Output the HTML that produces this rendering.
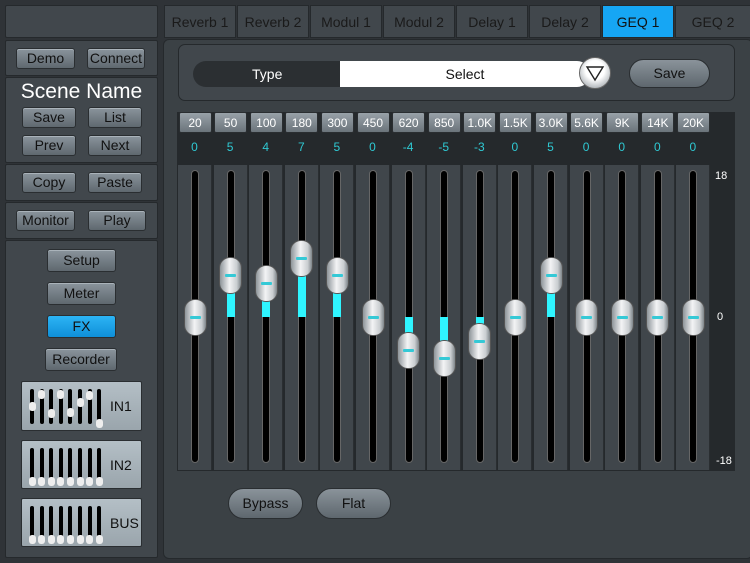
<!DOCTYPE html>
<html><head><meta charset="utf-8"><style>
*{box-sizing:border-box;margin:0;padding:0}
body{width:750px;height:563px;background:#2f3337;font-family:"Liberation Sans",sans-serif;position:relative;overflow:hidden}
.a{position:absolute}
.sec{position:absolute;left:5px;width:153px;background:#41474c;border:1px solid #25292c;border-radius:2px}
.btn{position:absolute;background:linear-gradient(#8a949c,#5f686f);border:1px solid #2a2e31;border-radius:3px;color:#111;font-size:14px;text-align:center;box-shadow:inset 0 1px 0 #aab3ba}
.tab{position:absolute;top:5px;height:33px;width:72px;background:#41474c;border:1px solid #25292c;color:#1a1a1a;font-size:14px;text-align:center;line-height:32px}
.lbl{position:absolute;top:112px;height:21px;width:33px;background:linear-gradient(#98a1a8,#6b747b);border:1px solid #2a2e31;border-radius:2px;font-size:12px;color:#fff;text-align:center;line-height:20px}
.val{position:absolute;top:140px;width:33px;text-align:center;color:#2fc9d3;font-size:12px}
.col{position:absolute;top:165px;height:305px;width:34px;background:#40464b;border-right:1px solid #2a2e31}
.trk{position:absolute;width:8px;background:#000;border:1px solid #666;border-radius:4px;top:170px;height:293px}
.cy{position:absolute;width:8px;background:#2ff5ff}
.th{position:absolute;width:23px;height:37px;border-radius:11px;background:linear-gradient(90deg,#8e959a,#f3f4f5 45%,#c9cdd0 80%,#7e858a);border:1px solid #555}
.th:after{content:"";position:absolute;left:5px;right:5px;top:16px;height:3px;background:#35c9d6;border-radius:1px}
.mini{position:absolute;left:21px;width:121px;background:linear-gradient(#b4bfc6,#9aa5ac);border:1px solid #2a2e31;border-radius:2px}
.mt{position:absolute;width:4px;background:#000;border-radius:2px}
.mk{position:absolute;width:7px;height:9px;background:#eee;border-radius:3px}
.ml{position:absolute;left:88px;font-size:14px;color:#111}
</style></head><body>
<div class="sec" style="top:5px;height:33px"></div>
<div class="sec" style="top:40px;height:36px"></div>
<div class="sec" style="top:77px;height:86px"></div>
<div class="sec" style="top:164px;height:37px"></div>
<div class="sec" style="top:202px;height:37px"></div>
<div class="sec" style="top:240px;height:318px"></div>
<div class="btn" style="left:16px;top:48px;width:59px;height:21px;line-height:19px">Demo</div>
<div class="btn" style="left:87px;top:48px;width:58px;height:21px;line-height:19px">Connect</div>
<div class="a" style="left:5px;top:80px;width:153px;text-align:center;color:#fff;font-size:21px">Scene Name</div>
<div class="btn" style="left:22px;top:107px;width:54px;height:21px;line-height:19px">Save</div>
<div class="btn" style="left:88px;top:107px;width:54px;height:21px;line-height:19px">List</div>
<div class="btn" style="left:22px;top:135px;width:54px;height:21px;line-height:19px">Prev</div>
<div class="btn" style="left:88px;top:135px;width:54px;height:21px;line-height:19px">Next</div>
<div class="btn" style="left:22px;top:172px;width:54px;height:21px;line-height:19px">Copy</div>
<div class="btn" style="left:88px;top:172px;width:54px;height:21px;line-height:19px">Paste</div>
<div class="btn" style="left:16px;top:210px;width:59px;height:21px;line-height:19px">Monitor</div>
<div class="btn" style="left:88px;top:210px;width:58px;height:21px;line-height:19px">Play</div>
<div class="btn" style="left:47px;top:249px;width:69px;height:23px;line-height:21px">Setup</div>
<div class="btn" style="left:47px;top:282px;width:69px;height:23px;line-height:21px">Meter</div>
<div class="btn" style="left:47px;top:315px;width:69px;height:23px;line-height:21px;background:linear-gradient(#2cb4f5,#0f8fd8);box-shadow:none">FX</div>
<div class="btn" style="left:45px;top:348px;width:72px;height:23px;line-height:21px">Recorder</div>
<div class="mini" style="top:381px;height:50px" id="m1"><div class="ml" style="top:16px">IN1</div></div>
<div class="mini" style="top:440px;height:49px" id="m2"><div class="ml" style="top:16px">IN2</div></div>
<div class="mini" style="top:498px;height:49px" id="m3"><div class="ml" style="top:16px">BUS</div></div>

<div class="tab" style="left:164px">Reverb 1</div>
<div class="tab" style="left:237px">Reverb 2</div>
<div class="tab" style="left:310px">Modul 1</div>
<div class="tab" style="left:383px">Modul 2</div>
<div class="tab" style="left:456px">Delay 1</div>
<div class="tab" style="left:529px">Delay 2</div>
<div class="tab" style="left:602px;background:#16a6f4;color:#111">GEQ 1</div>
<div class="tab" style="left:675px;width:76px">GEQ 2</div>

<div class="a" style="left:163px;top:39px;width:590px;height:520px;background:#3b4145;border:1px solid #25292c;border-radius:6px"></div>
<div class="a" style="left:178px;top:44px;width:557px;height:57px;background:#41474c;border:1px solid #25292c;border-radius:7px"></div>
<div class="a" style="left:193px;top:61px;width:160px;height:26px;background:#2b2f32;border-radius:13px;color:#fff;font-size:14px;line-height:26px;padding-left:59px">Type</div>
<div class="a" style="left:340px;top:61px;width:250px;height:26px;background:#fff;color:#111;font-size:14px;line-height:26px;text-align:center;border-radius:0 13px 13px 0">Select</div>
<div class="a" style="left:579px;top:57px;width:32px;height:32px;border-radius:50%;background:radial-gradient(circle at 50% 40%,#fff 40%,#b8bdc1 75%,#7b8186);border:1px solid #666"></div>
<svg class="a" style="left:585px;top:64px" width="20" height="18"><path d="M2 3 L18 3 L10 16 Z" fill="none" stroke="#222" stroke-width="1.4"/></svg>
<div class="a" style="left:629px;top:59px;width:81px;height:29px;border-radius:15px;background:linear-gradient(#8a939a,#5e676e);border:1px solid #2a2e31;color:#111;font-size:14px;text-align:center;line-height:27px">Save</div>

<div class="a" style="left:177px;top:112px;width:558px;height:359px;background:#25292c"></div>
<div class="a" style="left:715px;top:170px;color:#fff;font-size:11px">18</div>
<div class="a" style="left:717px;top:311px;color:#fff;font-size:11px">0</div>
<div class="a" style="left:716px;top:455px;color:#fff;font-size:11px">-18</div>
<div id="eq"></div>

<div class="a" style="left:228px;top:488px;width:75px;height:31px;border-radius:16px;background:linear-gradient(#8a939a,#5e676e);border:1px solid #2a2e31;color:#111;font-size:14px;text-align:center;line-height:29px">Bypass</div>
<div class="a" style="left:316px;top:488px;width:75px;height:31px;border-radius:16px;background:linear-gradient(#8a939a,#5e676e);border:1px solid #2a2e31;color:#111;font-size:14px;text-align:center;line-height:29px">Flat</div>
<script>
var L=["20","50","100","180","300","450","620","850","1.0K","1.5K","3.0K","5.6K","9K","14K","20K"],V=[0,5,4,7,5,0,-4,-5,-3,0,5,0,0,0,0],h="";
for(var i=0;i<15;i++){var x=178+i*35.6,c=x+17;
h+='<div class="col" style="left:'+x+'px"></div><div class="lbl" style="left:'+(x+0.5)+'px">'+L[i]+'</div><div class="val" style="left:'+x+'px">'+V[i]+'</div><div class="trk" style="left:'+(c-4)+'px"></div>';
var y=317-V[i]*8.3;
if(V[i]!=0){var t=Math.min(y,317),b=Math.max(y,317);h+='<div class="cy" style="left:'+(c-4)+'px;top:'+t+'px;height:'+(b-t)+'px"></div>';}
h+='<div class="th" style="left:'+(c-11.5)+'px;top:'+(y-18.5)+'px"></div>';}
document.getElementById("eq").innerHTML=h;
var pos=[[20,8,27,8,26,16,9,37],[36,36,36,36,36,36,36,36],[36,36,36,36,36,36,36,36]];
["m1","m2","m3"].forEach(function(id,k){var e=document.getElementById(id),s="";for(var j=0;j<8;j++){var lx=8+j*9.6;s+='<div class="mt" style="left:'+lx+'px;top:7px;height:35px"></div><div class="mk" style="left:'+(lx-1.5)+'px;top:'+pos[k][j]+'px"></div>';}e.innerHTML+=s;});
</script>
</body></html>
